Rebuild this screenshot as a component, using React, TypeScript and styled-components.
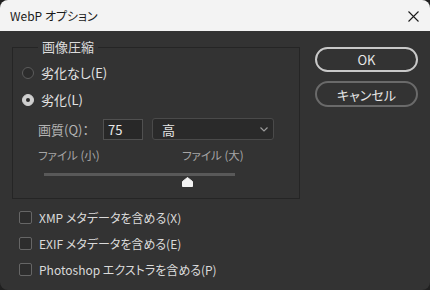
import * as React from 'react';
import styled, { createGlobalStyle } from 'styled-components';

const GlobalStyle = createGlobalStyle`
    html, body {
        margin: 0;
        padding: 0;
        background: #202020;
    }
    body {
        font-family: "Noto Sans CJK JP", "Noto Sans", sans-serif;
        font-feature-settings: "palt";
    }
`;

const Window = styled.div`
    width: 430px;
    height: 290px;
    box-sizing: border-box;
    border-radius: 8px;
    overflow: hidden;
    background: #333333;
    display: flex;
    flex-direction: column;
`;

const TitleBar = styled.div`
    height: 31px;
    flex: none;
    background: #f3f3f3;
    display: flex;
    align-items: center;
    justify-content: space-between;
    padding: 0 11px 0 10px;
    font-size: 12px;
    color: #1b1b1b;
`;

const CloseIcon = styled.svg`
    width: 11px;
    height: 11px;
    margin-top: 1px;
`;

const Body = styled.div`
    display: flex;
    padding: 8px 12px 0 12px;
    gap: 15px;
`;

const LeftColumn = styled.div`
    width: 288px;
    display: flex;
    flex-direction: column;
`;

const Group = styled.fieldset`
    margin: 0;
    padding: 0 0 0 9px;
    min-width: 0;
    height: 160px;
    box-sizing: border-box;
    border: 1px solid #252525;
`;

const Legend = styled.legend`
    margin-left: 16px;
    padding: 0 4px;
    font-size: 13px;
    line-height: 16px;
    color: #dcdcdc;
`;

const GroupContent = styled.div`
    padding-top: 4px;
    display: flex;
    flex-direction: column;
`;

const RadioRow = styled.label`
    height: 27px;
    display: flex;
    align-items: center;
    gap: 7px;
    font-size: 13px;
    color: #e4e4e4;
`;

const RadioCircle = styled.span<{ $checked?: boolean }>`
    width: 12px;
    height: 12px;
    box-sizing: border-box;
    border-radius: 50%;
    border: 1px solid ${p => (p.$checked ? '#cfcfcf' : '#5c5c5c')};
    background: ${p => (p.$checked ? '#cfcfcf' : '#2c2c2c')};
    display: flex;
    align-items: center;
    justify-content: center;
    &::after {
        content: '';
        display: ${p => (p.$checked ? 'block' : 'none')};
        width: 4px;
        height: 4px;
        border-radius: 50%;
        background: #2a2a2a;
    }
`;

const QualityRow = styled.div`
    margin: 4px 0 0 16px;
    height: 24px;
    display: flex;
    align-items: center;
`;

const QualityLabel = styled.span`
    width: 65px;
    font-size: 13px;
    color: #b4b4b4;
`;

const NumberBox = styled.div`
    width: 40px;
    height: 21px;
    box-sizing: border-box;
    border: 1px solid #505050;
    background: #282828;
    color: #e8e8e8;
    font-size: 13px;
    line-height: 19px;
    padding-left: 4px;
`;

const Select = styled.div`
    margin-left: 9px;
    width: 122px;
    height: 22px;
    box-sizing: border-box;
    border: 1px solid #4a4a4a;
    border-radius: 3px;
    background: #2a2a2a;
    color: #e4e4e4;
    font-size: 13px;
    display: flex;
    align-items: center;
    justify-content: space-between;
    padding: 0 5px 0 9px;
`;

const Chevron = styled.svg`
    width: 8px;
    height: 5px;
`;

const FileLabels = styled.div`
    margin: 6px 0 0 16px;
    height: 16px;
    display: flex;
    font-size: 11.5px;
    color: #a6a6a6;
`;

const FileLabel = styled.span<{ $width?: number }>`
    width: ${p => (p.$width ? `${p.$width}px` : 'auto')};
`;

const Slider = styled.div`
    position: relative;
    margin: 10px 0 0 22px;
    width: 191px;
    height: 3px;
    background: #595959;
`;

const Thumb = styled.svg`
    position: absolute;
    top: 4px;
    width: 11px;
    height: 10px;
`;

const Options = styled.div`
    margin: 5px 0 0 7px;
    display: flex;
    flex-direction: column;
`;

const CheckRow = styled.label`
    height: 26px;
    display: flex;
    align-items: center;
    gap: 7px;
    font-size: 12px;
    color: #dadada;
`;

const CheckBox = styled.span`
    width: 13px;
    height: 13px;
    box-sizing: border-box;
    border: 1px solid #666666;
    border-radius: 2px;
    background: #2d2d2d;
`;

const RightColumn = styled.div`
    margin-top: 8px;
    display: flex;
    flex-direction: column;
    gap: 9px;
`;

const Button = styled.div<{ $primary?: boolean }>`
    width: 103px;
    height: ${p => (p.$primary ? 25 : 26)}px;
    box-sizing: border-box;
    border-radius: 13px;
    border: 2px solid ${p => (p.$primary ? '#c9c9c9' : '#6a6a6a')};
    color: #e6e6e6;
    font-size: 13px;
    display: flex;
    align-items: center;
    justify-content: center;
`;

const quality = 75;

export default function App() {
    return (
        <>
            <GlobalStyle />
            <Window>
                <TitleBar>
                    <span>WebP オプション</span>
                    <CloseIcon viewBox="0 0 11 11">
                        <path d="M0.5 0.5 L10.5 10.5 M10.5 0.5 L0.5 10.5" stroke="#1b1b1b" strokeWidth="1.1" />
                    </CloseIcon>
                </TitleBar>
                <Body>
                    <LeftColumn>
                        <Group>
                            <Legend>画像圧縮</Legend>
                            <GroupContent>
                                <RadioRow>
                                    <RadioCircle />
                                    劣化なし(E)
                                </RadioRow>
                                <RadioRow>
                                    <RadioCircle $checked />
                                    劣化(L)
                                </RadioRow>
                                <QualityRow>
                                    <QualityLabel>画質(Q)：</QualityLabel>
                                    <NumberBox>{quality}</NumberBox>
                                    <Select>
                                        <span>高</span>
                                        <Chevron viewBox="0 0 8 5">
                                            <path d="M0.5 0.5 L4 4 L7.5 0.5" stroke="#9a9a9a" strokeWidth="1.2" fill="none" />
                                        </Chevron>
                                    </Select>
                                </QualityRow>
                                <FileLabels>
                                    <FileLabel $width={144}>ファイル (小)</FileLabel>
                                    <FileLabel>ファイル (大)</FileLabel>
                                </FileLabels>
                                <Slider>
                                    <Thumb viewBox="0 0 11 10" style={{ left: `calc(${quality}% - 5.5px)` }}>
                                        <path d="M5.5 0.5 L10.5 4.5 L10.5 9.5 L0.5 9.5 L0.5 4.5 Z" fill="#f2f2f2" stroke="#f2f2f2" strokeLinejoin="round" />
                                    </Thumb>
                                </Slider>
                            </GroupContent>
                        </Group>
                        <Options>
                            <CheckRow>
                                <CheckBox />
                                XMP メタデータを含める(X)
                            </CheckRow>
                            <CheckRow>
                                <CheckBox />
                                EXIF メタデータを含める(E)
                            </CheckRow>
                            <CheckRow>
                                <CheckBox />
                                Photoshop エクストラを含める(P)
                            </CheckRow>
                        </Options>
                    </LeftColumn>
                    <RightColumn>
                        <Button $primary>OK</Button>
                        <Button>キャンセル</Button>
                    </RightColumn>
                </Body>
            </Window>
        </>
    );
}
